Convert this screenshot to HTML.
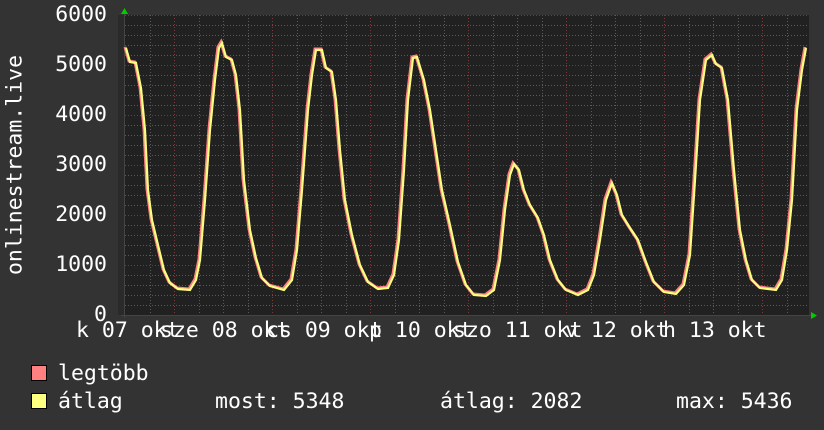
<!DOCTYPE html>
<html><head><meta charset="utf-8"><style>
html,body{margin:0;padding:0;background:#333333;}
body{width:824px;height:430px;position:relative;overflow:hidden;font-family:"DejaVu Sans Mono","Liberation Mono",monospace;color:#fff;font-size:21.5px;}
.t{position:absolute;white-space:pre;line-height:1;}
.sq{position:absolute;width:14px;height:14px;border:1px solid #000;}
</style></head><body>
<svg width="824" height="430" style="position:absolute;left:0;top:0">
<rect x="118" y="15" width="7" height="300" fill="#2a2a2a"/>
<rect x="125" y="15" width="684" height="300" fill="#212121"/>
<g stroke="#5a5a5a" stroke-width="1" stroke-dasharray="1,2">
<line x1="125" y1="25.5" x2="809" y2="25.5"/><line x1="125" y1="35.5" x2="809" y2="35.5"/><line x1="125" y1="45.5" x2="809" y2="45.5"/><line x1="125" y1="55.5" x2="809" y2="55.5"/>
<line x1="125" y1="75.5" x2="809" y2="75.5"/><line x1="125" y1="85.5" x2="809" y2="85.5"/><line x1="125" y1="95.5" x2="809" y2="95.5"/><line x1="125" y1="105.5" x2="809" y2="105.5"/>
<line x1="125" y1="125.5" x2="809" y2="125.5"/><line x1="125" y1="135.5" x2="809" y2="135.5"/><line x1="125" y1="145.5" x2="809" y2="145.5"/><line x1="125" y1="155.5" x2="809" y2="155.5"/>
<line x1="125" y1="175.5" x2="809" y2="175.5"/><line x1="125" y1="185.5" x2="809" y2="185.5"/><line x1="125" y1="195.5" x2="809" y2="195.5"/><line x1="125" y1="205.5" x2="809" y2="205.5"/>
<line x1="125" y1="225.5" x2="809" y2="225.5"/><line x1="125" y1="235.5" x2="809" y2="235.5"/><line x1="125" y1="245.5" x2="809" y2="245.5"/><line x1="125" y1="255.5" x2="809" y2="255.5"/>
<line x1="125" y1="275.5" x2="809" y2="275.5"/><line x1="125" y1="285.5" x2="809" y2="285.5"/><line x1="125" y1="295.5" x2="809" y2="295.5"/><line x1="125" y1="305.5" x2="809" y2="305.5"/>
<line x1="150.5" y1="15" x2="150.5" y2="315"/><line x1="199.5" y1="15" x2="199.5" y2="315"/><line x1="223.5" y1="15" x2="223.5" y2="315"/><line x1="248.5" y1="15" x2="248.5" y2="315"/>
<line x1="297.5" y1="15" x2="297.5" y2="315"/><line x1="321.5" y1="15" x2="321.5" y2="315"/><line x1="346.5" y1="15" x2="346.5" y2="315"/>
<line x1="395.5" y1="15" x2="395.5" y2="315"/><line x1="419.5" y1="15" x2="419.5" y2="315"/><line x1="444.5" y1="15" x2="444.5" y2="315"/>
<line x1="493.5" y1="15" x2="493.5" y2="315"/><line x1="517.5" y1="15" x2="517.5" y2="315"/><line x1="542.5" y1="15" x2="542.5" y2="315"/>
<line x1="591.5" y1="15" x2="591.5" y2="315"/><line x1="615.5" y1="15" x2="615.5" y2="315"/><line x1="640.5" y1="15" x2="640.5" y2="315"/>
<line x1="689.5" y1="15" x2="689.5" y2="315"/><line x1="713.5" y1="15" x2="713.5" y2="315"/><line x1="738.5" y1="15" x2="738.5" y2="315"/><line x1="787.5" y1="15" x2="787.5" y2="315"/>
</g>
<g stroke="#7a3a3a" stroke-width="1" stroke-dasharray="1,2">
<line x1="125" y1="15.5" x2="809" y2="15.5"/><line x1="125" y1="65.5" x2="809" y2="65.5"/><line x1="125" y1="115.5" x2="809" y2="115.5"/><line x1="125" y1="165.5" x2="809" y2="165.5"/><line x1="125" y1="215.5" x2="809" y2="215.5"/><line x1="125" y1="265.5" x2="809" y2="265.5"/>
<line x1="174.5" y1="15" x2="174.5" y2="315"/><line x1="272.5" y1="15" x2="272.5" y2="315"/><line x1="370.5" y1="15" x2="370.5" y2="315"/><line x1="468.5" y1="15" x2="468.5" y2="315"/><line x1="566.5" y1="15" x2="566.5" y2="315"/><line x1="664.5" y1="15" x2="664.5" y2="315"/><line x1="762.5" y1="15" x2="762.5" y2="315"/>
</g>
<line x1="124.5" y1="12" x2="124.5" y2="318" stroke="#444" stroke-width="1"/>
<line x1="121" y1="315.5" x2="812" y2="315.5" stroke="#444" stroke-width="1"/>
<polygon points="121,14 128,14 124.5,8" fill="#00cc00"/>
<polygon points="811,312 811,319 817,315.5" fill="#00cc00"/>
<defs><polyline id="c" fill="none" points="126,48 130,62 136,63 141,88 145,130 148,190 152,220 158,245 164,270 170,283 178,289 190,290 196,280 200,260 205,200 210,130 215,80 219,48 222,43 226,57 232,60 236,75 240,110 244,180 250,230 256,258 262,278 270,286 284,290 292,280 297,250 302,190 308,110 312,75 316,50 322,50 326,68 332,72 336,100 340,150 345,200 352,235 360,265 368,282 378,289 388,288 394,275 399,240 404,170 408,100 413,58 417,57 424,80 430,110 436,150 442,190 450,225 458,262 466,285 474,295 486,296 494,290 500,260 505,210 510,175 514,164 519,170 524,190 530,205 538,218 544,235 550,260 558,280 566,290 578,295 588,290 594,275 600,240 606,200 612,183 617,195 622,215 630,228 638,240 646,262 654,282 664,292 676,294 684,285 690,255 695,180 700,100 706,60 712,55 716,64 722,68 728,100 734,170 740,230 746,260 752,280 760,288 776,290 782,280 787,250 792,200 797,110 802,70 806,48"/></defs>
<use href="#c" stroke="#ff8080" stroke-width="3" transform="translate(-1,-1)"/>
<use href="#c" stroke="#ffff80" stroke-width="2.2"/>
</svg>
<div class="t" style="right:717px;top:4px">6000</div>
<div class="t" style="right:717px;top:54px">5000</div>
<div class="t" style="right:717px;top:104px">4000</div>
<div class="t" style="right:717px;top:154px">3000</div>
<div class="t" style="right:717px;top:204px">2000</div>
<div class="t" style="right:717px;top:254px">1000</div>
<div class="t" style="right:717px;top:304px">0</div>
<div class="t" style="top:165px;transform:translate(-50%,-50%) rotate(-90deg);left:15px">onlinestream.live</div>
<div class="t" style="left:76px;top:320px">k 07 okt</div>
<div class="t" style="left:160px;top:320px">sze 08 okt</div>
<div class="t" style="left:266px;top:320px">cs 09 okt</div>
<div class="t" style="left:369px;top:320px">p 10 okt</div>
<div class="t" style="left:453px;top:320px">szo 11 okt</div>
<div class="t" style="left:565px;top:320px">v 12 okt</div>
<div class="t" style="left:663px;top:320px">h 13 okt</div>
<div class="sq" style="left:31px;top:365px;background:#ff8080"></div>
<div class="sq" style="left:31px;top:393px;background:#ffff80"></div>
<div class="t" style="left:58px;top:363px">legtöbb</div>
<div class="t" style="left:58px;top:391px">átlag</div>
<div class="t" style="left:215px;top:391px">most: 5348</div>
<div class="t" style="left:440px;top:391px">átlag: 2082</div>
<div class="t" style="left:676px;top:391px">max: 5436</div>
</body></html>
